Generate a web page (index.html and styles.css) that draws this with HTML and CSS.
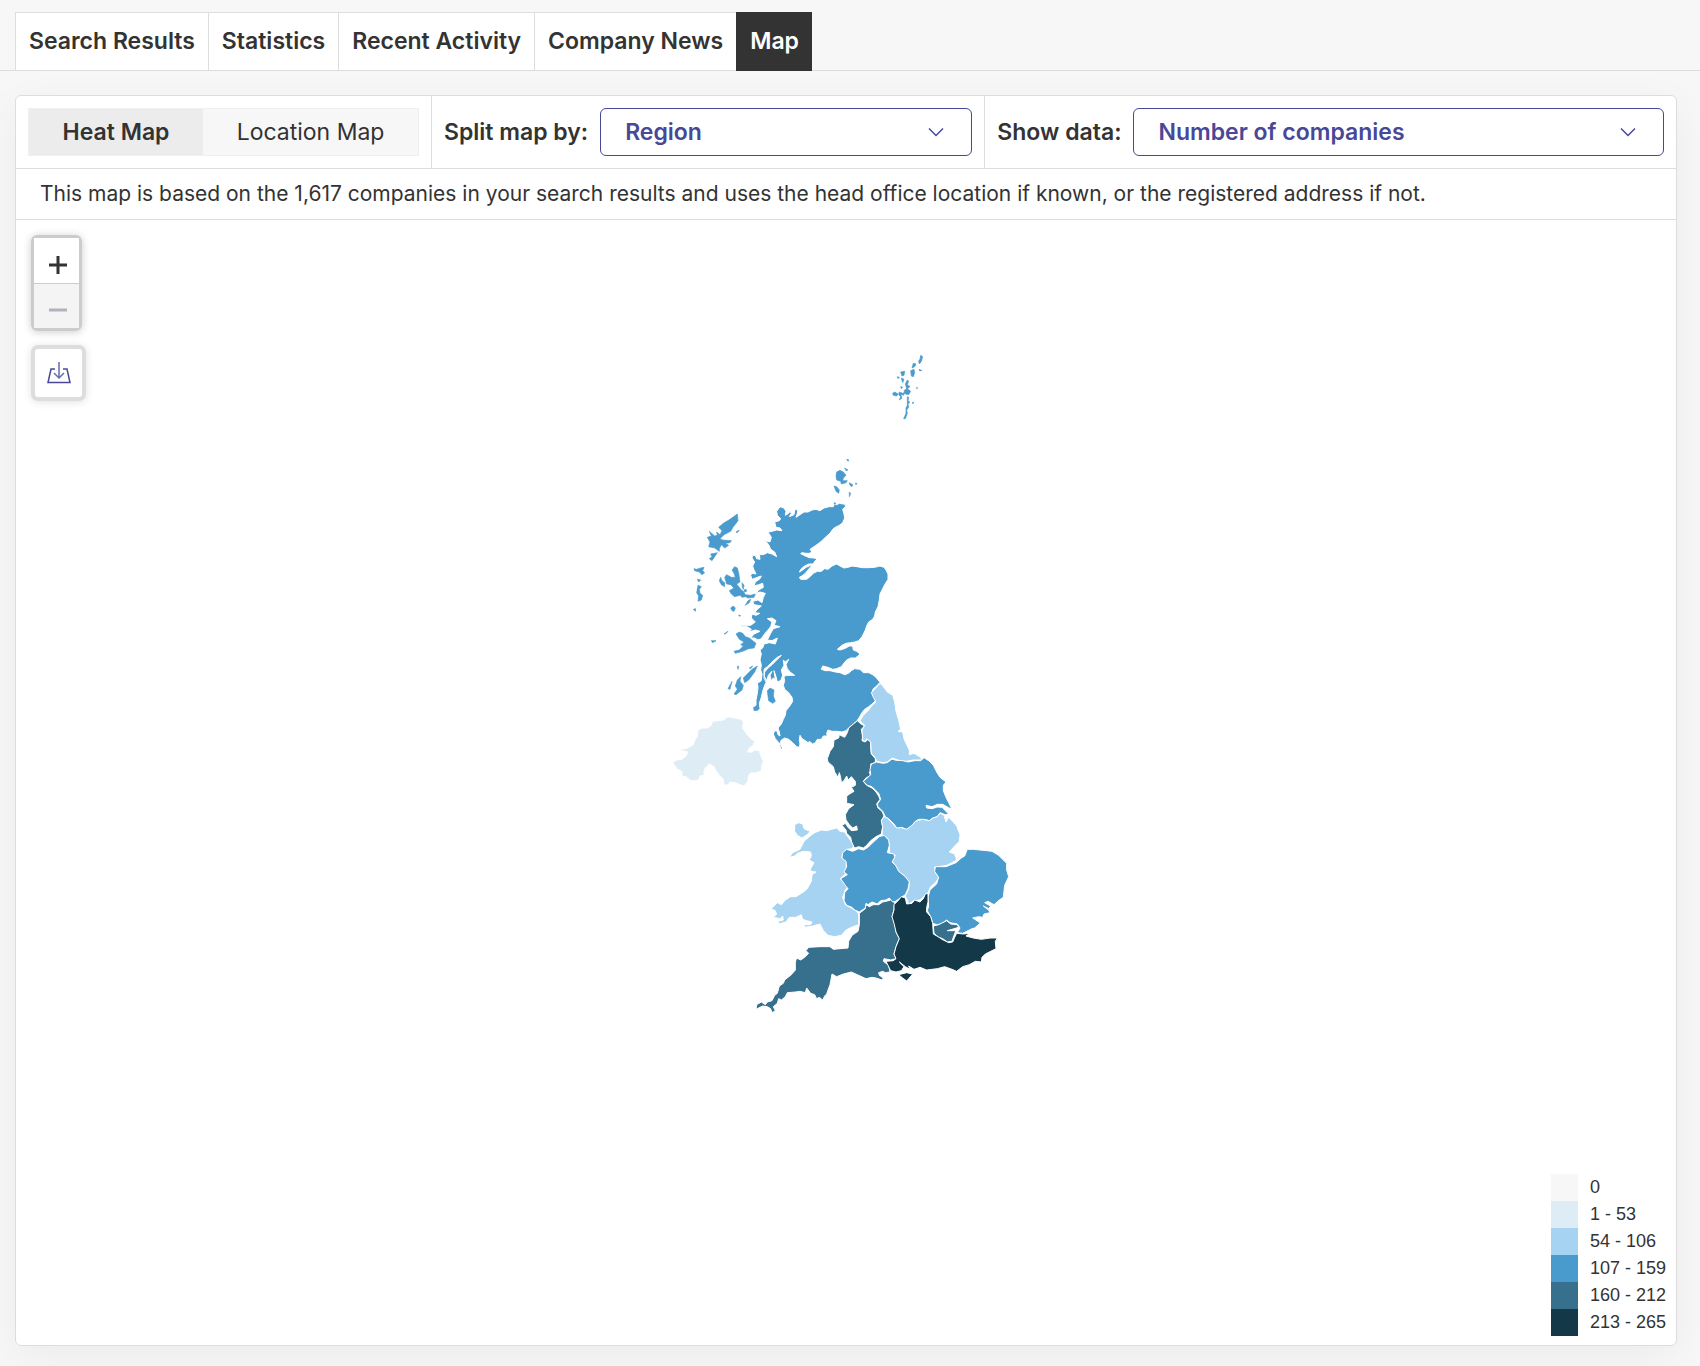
FILE: index.html
```html
<!DOCTYPE html>
<html lang="en">
<head>
  <meta charset="UTF-8">
  <meta name="viewport" content="width=device-width, initial-scale=1.0">
  <title>Map</title>
  <link rel="stylesheet" href="styles.css">
</head>

<body>
  <!-- Tabs -->
  <nav class="tabs">
    <a href="#results">Search Results</a>
    <a href="#statistics">Statistics</a>
    <a href="#activity">Recent Activity</a>
    <a href="#news">Company News</a>
    <a href="#map" class="active">Map</a>
  </nav>

  <main class="panel">
    <!-- Toolbar -->
    <div class="toolbar">
      <div class="tool">
        <div class="toggle">
          <button type="button" class="on">Heat Map</button>
          <button type="button">Location Map</button>
        </div>
      </div>
      <div class="tool">
        <label for="split">Split map by:</label>
        <div class="select">
          <select id="split">
            <option>Region</option>
          </select>
          <svg viewBox="0 0 16 10" aria-hidden="true"><path d="M1 1.5 8 8.5 15 1.5"/></svg>
        </div>
      </div>
      <div class="tool">
        <label for="data">Show data:</label>
        <div class="select">
          <select id="data">
            <option>Number of companies</option>
          </select>
          <svg viewBox="0 0 16 10" aria-hidden="true"><path d="M1 1.5 8 8.5 15 1.5"/></svg>
        </div>
      </div>
    </div>

    <p class="notice">This map is based on the 1,617 companies in your search results and uses the head office location if known, or the registered address if not.</p>

    <!-- Map -->
    <div class="map">
      <svg class="regions" viewBox="-1932 -360 4980 3375" role="img" aria-label="Companies by region">
        <!-- Scotland -->
        <g class="level-3" transform="translate(60 450)">
          <path d="M463 42 470 44 478 40 496 43 496 50 488 58 492 72 494 84 488 98 478 106 466 112 458 118 450 130 436 142 424 154 408 166 396 174 390 178 396 186 388 190 378 190 366 188 362 191 376 198 388 203 402 204 412 206 404 214 400 222 386 222 374 228 364 236 358 246 368 240 378 232 392 226 396 226 384 240 376 250 366 258 358 262 362 268 380 268 390 260 400 250 412 244 424 244 434 236 444 238 456 228 470 222 480 228 492 234 504 232 516 228 530 230 548 233 566 233 584 232 600 228 612 232 618 240 624 252 624 268 614 284 606 300 600 312 598 330 594 350 586 366 584 378 578 388 566 396 560 408 556 420 552 428 546 440 536 452 524 456 512 458 498 460 486 466 472 478 480 480 496 475 508 468 518 468 520 480 530 484 540 492 534 498 526 504 512 504 500 510 490 522 484 530 470 536 458 538 444 532 428 528 424 538 436 542 450 542 466 546 480 548 494 554 506 550 514 542 524 536 540 538 550 548 566 548 578 554 588 562 600 577 590 588 580 596 576 606 582 616 586 632 576 642 566 650 554 658 546 668 538 682 530 694 520 702 508 712 498 722 486 726 472 724 456 724 444 720 440 730 442 738 430 738 424 748 412 748 406 758 398 762 388 754 384 758 376 752 366 746 360 736 358 750 360 762 358 772 350 770 338 758 326 748 314 744 304 750 300 760 306 772 306 780 302 776 298 760 286 746 280 732 284 722 292 724 294 734 300 738 298 726 294 714 304 702 310 688 316 676 318 662 328 650 338 634 336 622 326 608 314 598 310 586 314 572 312 562 318 556 344 556 330 546 322 536 318 524 326 508 316 516 310 510 312 526 304 540 308 556 304 568 298 574 292 576 288 560 282 542 286 568 280 564 274 572 270 556 276 544 266 554 258 576 252 564 254 546 264 534 276 524 290 510 304 496 292 502 276 516 262 530 252 538 252 556 260 574 254 586 248 604 244 622 238 640 240 656 232 664 220 664 218 652 228 646 228 630 232 610 234 592 232 580 244 572 246 552 242 540 244 524 240 510 244 492 240 480 248 474 252 462 268 458 286 462 292 444 276 452 262 450 272 430 280 416 300 410 282 406 288 392 276 384 262 386 276 396 272 410 262 422 252 434 244 446 234 450 224 444 212 444 222 432 240 424 226 420 206 426 214 418 202 410 178 410 188 406 212 406 226 396 214 384 216 372 228 376 240 370 224 368 232 358 244 348 222 344 218 334 234 330 246 338 250 322 256 310 240 306 228 310 236 300 250 292 248 280 236 284 222 288 226 276 240 266 244 258 232 262 216 268 212 256 216 250 228 252 222 240 218 228 224 216 216 204 218 196 226 196 230 206 240 208 238 194 250 194 262 188 276 192 290 200 284 186 272 178 266 164 256 152 270 156 274 142 264 126 276 124 290 120 306 122 300 114 288 112 284 96 298 92 302 86 292 76 290 64 300 50 312 54 318 64 316 76 326 70 330 64 334 70 328 80 342 74 344 60 354 58 352 70 348 82 360 74 372 66 384 66 396 60 408 58 420 62 432 54 448 50 460 50Z"/>
          <g class="islands">
            <!-- Outer Hebrides -->
            <path d="M172 72 174 92 160 110 152 124 132 134 120 146 128 150 154 152 150 158 136 160 146 166 134 174 124 164 118 176 118 184 104 174 86 170 90 156 82 142 94 138 88 124 104 138 112 136 110 126 120 134 126 122 116 112 130 100 150 88Z"/>
            <path d="M88 206 96 200 92 192 104 190 112 188 104 200 96 212ZM42 236 50 238 62 234 72 232 68 242 74 248 66 254 58 246 44 242ZM52 268 62 270 56 276ZM54 286 64 290 58 298 60 310 68 316 64 330 54 334 56 318 50 308ZM40 358 47 356 46 364ZM168 126 178 120 172 128Z"/>
            <!-- Skye and the small isles -->
            <path d="M156 240 164 230 172 234 176 248 180 276 170 282 184 300 190 304 196 314 212 316 226 312 222 322 204 324 196 320 186 322 180 316 164 320 154 312 148 302 162 294 152 284 140 282 134 262 140 254 154 262 166 262 162 250ZM118 272 122 262 126 272 134 278 134 290 124 284ZM152 354 160 348 166 354 162 364 156 362ZM186 278 192 286 190 298 187 292ZM196 346 204 332 212 328 208 338ZM176 375 182 377 178 379ZM192 300 198 298 200 304 194 306Z"/>
            <!-- Mull, Jura, Islay, Arran -->
            <path d="M168 432 178 426 188 430 196 440 208 444 218 452 228 460 222 474 206 476 188 484 166 490 162 484 178 480 190 468 182 464 192 456 178 448ZM94 452 108 452 98 458ZM132 432 144 424 136 432ZM232 528 224 546 206 570 194 578 190 564 204 550 216 538ZM208 534 218 528 212 536ZM172 570 182 560 180 574 190 586 186 600 168 614 162 612 172 598 166 588ZM144 596 156 574 150 598ZM172 530 176 528 174 538ZM262 602 270 594 282 600 280 618 286 634 278 640 266 632 264 618Z"/>
          </g>
        </g>
        <!-- Orkney and Shetland -->
        <g class="level-3 islands">
          <path d="M530 396 540 391 550 396 558 406 550 414 548 422 562 422 558 428 544 432 542 424 530 420 528 408ZM522 438 530 440 538 450 536 460 528 454ZM554 384 564 390 558 392ZM560 358 567 360 564 364ZM568 428 578 434 576 440 570 436ZM568 456 572 460 568 470ZM586 430 591 430 588 434ZM522 488 528 490 524 493Z"/>
          <path d="M782 46 788 50 784 64 778 72 776 62 780 58ZM778 88 786 92 778 92ZM760 70 768 72 764 80 756 84ZM752 92 762 88 764 98 760 110 754 108ZM722 96 734 94 732 106 726 108ZM724 114 732 118 728 128ZM712 110 718 112 714 116ZM742 120 746 124 742 134 750 140 742 146 752 154 746 164 736 162 732 152 740 146 736 132ZM698 160 704 156 714 162 710 168 700 166ZM718 156 728 160 736 156 730 166 722 162 726 174 718 180 722 170 716 164ZM722 140 728 142 724 146ZM742 170 746 172 744 184 750 186 744 192 746 202 740 210 742 220 736 236 731 236 738 220 738 204 742 196ZM758 186 762 188 758 191ZM770 142 773 144 770 146Z"/>
        </g>
        <!-- Northern Ireland -->
        <path class="level-1" transform="translate(0 1080)" d="M38 188 50 180 66 178 78 168 84 156 66 152 62 146 78 146 98 136 104 122 112 108 114 90 126 84 140 84 152 78 158 64 176 62 190 60 204 50 224 54 244 58 250 68 248 84 256 96 268 112 284 124 280 136 270 142 262 156 276 156 284 150 298 152 302 166 310 184 304 200 304 212 290 218 270 220 264 232 264 244 252 258 240 254 224 248 210 246 204 254 192 256 190 238 178 226 168 212 162 200 148 192 136 204 132 212 132 226 120 228 116 240 104 242 92 242 78 230 66 228 66 214 52 208Z"/>
        <g transform="translate(420 990)">
          <!-- North West -->
          <path class="level-4" d="M173 152 180 160 194 168 184 178 188 198 186 212 196 216 204 208 212 216 212 232 214 252 226 266 226 278 212 282 214 296 208 308 212 316 198 324 190 334 200 346 216 354 228 366 236 378 240 388 230 402 234 414 246 424 252 438 244 452 248 470 244 492 228 500 212 512 200 526 190 534 176 530 164 534 156 522 152 502 140 490 138 480 126 466 136 460 144 472 154 482 172 480 170 468 158 474 148 464 138 450 136 434 146 416 162 404 140 400 140 378 152 370 162 364 154 352 166 346 166 334 154 320 144 330 140 318 132 332 124 338 122 322 118 308 114 322 104 306 100 290 84 276 82 266 90 244 100 230 102 210 116 204 118 194 134 202 142 188 146 174 160 162Z"/>
          <!-- North East -->
          <path class="level-2" d="M240 40 250 50 262 66 278 76 284 96 288 124 296 150 302 178 294 184 308 186 312 206 320 224 328 240 328 254 342 250 362 262 366 270 340 270 318 274 300 272 288 268 276 264 262 276 248 278 230 274 226 264 214 250 212 216 200 206 194 214 188 210 186 180 194 166 180 152 190 136 206 120 218 104 228 96 220 82 214 68 226 56Z"/>
          <!-- Yorkshire and the Humber -->
          <path class="level-3" d="M230 276 248 280 262 278 276 267 288 271 308 272 324 276 344 272 362 272 372 263 386 272 400 286 410 306 420 322 438 336 430 346 430 362 438 382 446 398 456 418 446 413 428 403 412 403 396 410 378 406 380 414 396 416 412 411 426 412 446 432 436 434 420 428 412 440 398 444 388 452 372 448 356 448 344 456 336 468 320 478 304 472 292 476 282 462 268 448 256 440 248 424 234 410 232 402 242 388 236 370 216 350 202 346 190 334 206 320 212 314 210 298 214 282Z"/>
          <!-- East Midlands -->
          <path class="level-2" d="M252 440 262 444 272 454 290 474 304 473 320 478 338 464 346 454 368 448 388 452 400 444 412 440 420 429 432 436 438 456 446 442 460 456 470 468 480 494 478 514 464 528 448 546 464 552 470 570 456 578 440 586 404 592 406 606 416 622 408 636 392 650 384 668 370 680 360 690 342 692 326 702 320 686 316 678 326 656 328 636 316 620 296 604 288 588 276 574 286 556 268 548 268 524 264 506 246 494 248 470 244 452Z"/>
        </g>
        <g transform="translate(240 1410)">
          <!-- Wales -->
          <path class="level-2" d="M244 60 260 62 290 54 300 64 314 66 322 78 332 92 340 106 338 116 320 118 308 130 306 144 320 152 318 170 322 182 314 194 300 206 314 216 326 228 316 240 308 262 316 284 334 294 350 304 356 312 356 344 334 352 318 360 304 376 284 380 264 376 250 362 240 342 218 348 194 352 192 344 212 344 216 336 200 332 188 328 184 314 168 322 148 322 138 336 116 342 114 334 130 330 128 318 120 326 100 322 110 312 104 300 92 298 112 278 124 284 136 270 152 260 168 260 190 246 202 236 214 214 216 194 228 186 212 184 212 176 222 158 208 150 214 138 212 126 190 124 172 130 164 138 148 142 158 128 180 118 192 94 210 78 224 68ZM164 44 176 38 188 42 192 56 210 64 204 72 192 80 186 84 172 76 164 64Z"/>
          <!-- South West -->
          <path class="level-4" d="M358 310 376 296 378 284 388 290 400 284 416 284 428 276 446 272 456 268 464 280 462 300 456 320 468 340 468 366 478 386 468 410 462 432 468 446 452 450 432 446 430 454 446 466 450 486 436 488 428 484 416 488 418 496 430 504 426 510 408 504 396 502 378 506 356 496 334 486 310 492 290 500 276 492 274 504 270 524 264 540 260 552 254 558 248 570 238 562 230 566 224 554 212 550 200 534 196 548 180 544 166 546 142 548 136 560 124 570 116 566 112 580 100 590 106 602 96 608 92 596 82 590 68 588 48 598 50 584 64 576 76 584 82 576 96 572 104 556 112 550 118 528 130 520 134 510 154 494 166 480 166 456 170 444 182 450 194 442 206 430 198 422 206 412 240 410 270 410 280 418 300 416 324 414 326 394 336 376 354 364 358 344Z"/>
        </g>
        <g transform="translate(540 1440)">
          <!-- West Midlands -->
          <path class="level-3" d="M132 46 146 60 148 76 142 98 162 102 164 112 156 126 168 138 176 154 196 170 208 186 204 206 196 224 184 232 166 244 158 246 148 234 138 240 122 242 112 252 96 246 84 254 78 250 76 264 58 276 44 270 36 262 20 256 12 242 14 218 24 206 16 196 2 176 22 164 12 156 20 140 18 124 6 114 8 98 20 88 38 94 56 86 70 90 84 82 100 66 118 50Z"/>
          <!-- East of England -->
          <path class="level-3" d="M382 88 400 88 440 92 456 94 476 106 500 130 500 150 506 170 494 196 490 232 478 240 462 254 444 244 434 248 452 258 446 266 430 258 446 270 450 278 432 282 428 292 416 290 398 294 414 304 420 310 404 324 396 326 384 332 368 340 352 338 360 324 352 312 330 308 320 300 304 312 290 314 278 310 272 290 262 272 266 258 264 232 270 210 290 192 296 172 284 154 286 140 318 140 348 128 364 114 374 108Z"/>
          <!-- London -->
          <path class="level-4" d="M280 318 296 314 320 302 332 312 352 314 356 322 336 328 322 332 348 332 342 346 336 364 322 366 308 356 296 352 282 340Z"/>
          <!-- South East -->
          <path class="level-5" d="M256 222 264 220 264 246 260 262 260 276 272 290 278 310 280 342 294 350 306 358 326 368 338 366 344 352 350 340 370 342 390 340 378 348 400 354 424 358 450 354 472 354 466 364 468 386 452 394 436 402 426 412 424 426 406 424 388 434 368 440 350 454 336 448 314 440 292 446 260 450 240 442 222 448 206 438 210 448 196 440 178 426 192 440 184 452 168 456 152 452 138 424 160 422 168 416 162 402 168 380 178 356 168 336 162 310 156 290 162 270 162 254 176 240 184 230 196 234 200 252 216 250 224 240 240 246 250 236Z"/>
          <path class="level-5" d="M176 464 200 458 218 462 206 476 200 483 188 474Z"/>
        </g>
      </svg>

      <div class="controls">
        <div class="zoom">
          <button type="button" aria-label="Zoom in">
            <svg viewBox="0 0 20 20" aria-hidden="true"><path d="M10 1V19M1 10H19"/></svg>
          </button>
          <button type="button" aria-label="Zoom out" disabled>
            <svg viewBox="0 0 20 20" aria-hidden="true"><path d="M1 10H19"/></svg>
          </button>
        </div>
        <button type="button" class="download" aria-label="Download">
          <svg viewBox="0 0 24 22" aria-hidden="true"><path d="M8 7H4L1 20.500H23L20 7H16"/><path class="arrow" d="M12 0V16M7 11 12 16 17 11"/></svg>
        </button>
      </div>

      <ul class="legend">
        <li><span class="swatch level-0"></span>0</li>
        <li><span class="swatch level-1"></span>1 - 53</li>
        <li><span class="swatch level-2"></span>54 - 106</li>
        <li><span class="swatch level-3"></span>107 - 159</li>
        <li><span class="swatch level-4"></span>160 - 212</li>
        <li><span class="swatch level-5"></span>213 - 265</li>
      </ul>
    </div>
  </main>
</body>
</html>
```
FILE: styles.css
```css
* {
  box-sizing: border-box;
}

body {
  margin: 0;
  background: #f7f7f7;
  color: #333;
  font-family: Inter, "Liberation Sans", sans-serif;
  font-size: 23px;
  line-height: 28px;
}

button,
select {
  font: inherit;
  color: inherit;
  cursor: pointer;
}

/* Tabs */
.tabs {
  display: flex;
  padding: 12px 15px 0;
  border-bottom: 1px solid #ddd;
}

.tabs a {
  margin-bottom: -1px;
  padding: 14px 13px 15px;
  background: #fff;
  border: 1px solid #ddd;
  border-right: 0;
  color: #333;
  font-weight: 600;
  text-decoration: none;
}

.tabs .active {
  background: #333;
  border-color: #333;
  color: #fff;
}

/* Panel */
.panel {
  margin: 24px 23px 20px 15px;
  background: #fff;
  border: 1px solid #ddd;
  border-radius: 6px;
  box-shadow: 0 10px 40px rgba(0, 0, 0, 0.05);
}

.toolbar {
  display: grid;
  grid-template-columns: 3fr 4fr 5fr;
  border-bottom: 1px solid #ddd;
}

.tool {
  display: flex;
  align-items: center;
  gap: 12px;
  padding: 12px;
  border-left: 1px solid #ddd;
}

.tool:first-child {
  border-left: 0;
}

.tool label {
  font-weight: 600;
  white-space: nowrap;
}

.toggle {
  display: flex;
  flex: 1;
  border: 1px solid #f0f0f0;
}

.toggle button {
  flex: auto;
  height: 46px;
  padding: 0;
  border: 0;
  background: #f7f7f7;
}

.toggle .on {
  background: #ececec;
  font-weight: 600;
}

.select {
  position: relative;
  flex: 1;
}

.select select {
  display: block;
  width: 100%;
  height: 48px;
  padding: 0 60px 0 24px;
  appearance: none;
  background: #fff;
  border: 1px solid #484896;
  border-radius: 6px;
  color: #484896;
  font-weight: 600;
}

.select svg {
  position: absolute;
  top: 19px;
  right: 28px;
  width: 16px;
  height: 10px;
  fill: none;
  stroke: #484896;
  stroke-width: 1.5;
  pointer-events: none;
}

.notice {
  margin: 0;
  padding: 11px 24px;
  border-bottom: 1px solid #ddd;
  font-size: 21px;
}

/* Map */
.map {
  position: relative;
}

.regions {
  display: block;
  width: 100%;
}

.regions path {
  stroke: #fff;
  stroke-width: 3;
  stroke-linejoin: round;
}

.regions .islands path {
  stroke: #4a9bcd;
  stroke-width: 2;
}

.level-0 { fill: #f7f7f7; background: #f7f7f7; }
.level-1 { fill: #deecf6; background: #deecf6; }
.level-2 { fill: #a5d3f1; background: #a5d3f1; }
.level-3 { fill: #4a9bcd; background: #4a9bcd; }
.level-4 { fill: #36708d; background: #36708d; }
.level-5 { fill: #133948; background: #133948; }

.controls {
  position: absolute;
  top: 15px;
  left: 15px;
  display: flex;
  flex-direction: column;
  align-items: flex-start;
  gap: 14px;
}

.zoom {
  border: 3px solid #ccc;
  border-radius: 6px;
  box-shadow: 0 1px 8px rgba(0, 0, 0, 0.2);
}

.controls button {
  display: flex;
  align-items: center;
  justify-content: center;
  background: #fff;
}

.controls svg {
  fill: none;
}

.zoom button {
  width: 45px;
  height: 45px;
  padding: 8px 0 0 3px;
  border: 0;
}

.zoom button:disabled {
  background: #f4f4f4;
  border-top: 1px solid #ccc;
  cursor: default;
}

.zoom svg {
  width: 20px;
  height: 20px;
  stroke: #333;
  stroke-width: 3;
}

.zoom button:disabled svg {
  stroke: #b0b3bb;
}

.controls .download {
  width: 55px;
  height: 56px;
  padding: 0;
  border: 4px solid #ddd;
  border-radius: 7px;
  box-shadow: 0 1px 8px rgba(0, 0, 0, 0.12);
}

.download svg {
  width: 24px;
  height: 22px;
  stroke: #484896;
  stroke-width: 1.5;
}

.download .arrow {
  stroke: #5f6cae;
}

.legend {
  position: absolute;
  right: 10px;
  bottom: 9px;
  margin: 0;
  padding: 0;
  list-style: none;
  font: 18px/27px "Liberation Sans", Arial, sans-serif;
}

.legend li {
  display: flex;
  gap: 12px;
}

.swatch {
  width: 27px;
  height: 27px;
}
```
